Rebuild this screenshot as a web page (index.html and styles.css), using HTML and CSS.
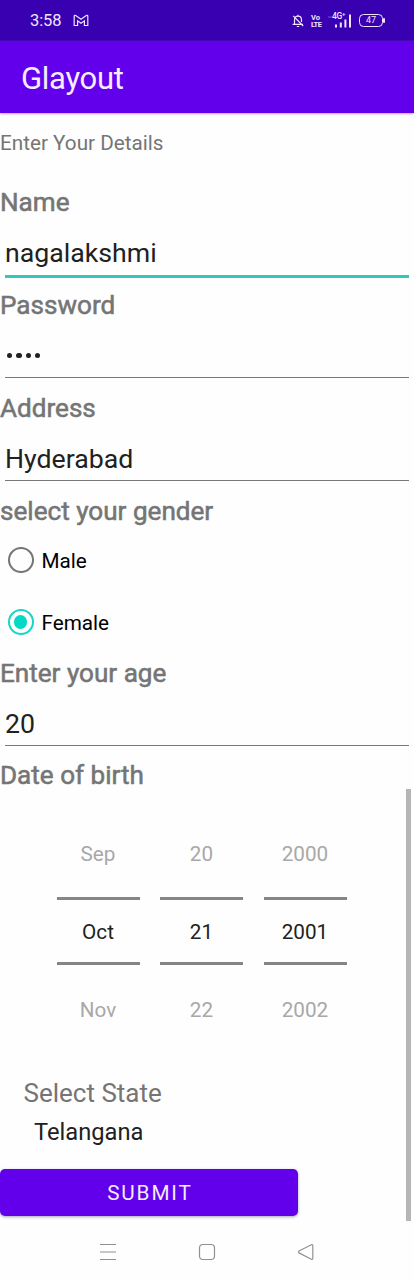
FILE: index.html
```html
<!DOCTYPE html>
<html lang="en">
<head>
<meta charset="utf-8">
<title>Glayout</title>
<link rel="stylesheet" href="styles.css">
</head>
<body>
<div class="screen">
  <header class="status">
    <span class="clock">3:58</span>
    <svg class="mail" width="16" height="13" viewBox="0 0 16 13"><path d="M1.2 11.5V2.4Q1.2 .7 2.7 1.6L8 5.2L13.3 1.6Q14.8 .7 14.8 2.4V11.5H11.4V6.8L8 9.2L4.6 6.8V11.5Z"/></svg>
    <svg class="bell" width="12" height="14" viewBox="0 0 12 14"><path d="M2.5 10V6Q2.5 2.2 6 2.2Q9.5 2.2 9.5 6V8M.6 10.3H11M4.8 12.5H7.2M6 .8V2M1.2 1.8L11.2 12"/></svg>
    <span class="volte"><span>Vo</span><span>LTE</span></span>
    <span class="signal">
      <svg width="24" height="16" viewBox="0 0 24 16"><path class="dots" d="M1 3V5M3 3V5"/><path class="bars" d="M8 11.5V14.5M12.8 9.5V14.5M17.4 6.5V14.5M22 1.5V14.5"/></svg>
      <span class="network">4G⁺</span>
    </span>
    <span class="battery">47</span>
  </header>
  <h1 class="appbar">Glayout</h1>
  <main class="content">
    <form class="form">
      <p class="intro">Enter Your Details</p>
      <div class="field"><div class="label">Name</div><div class="value active">nagalakshmi</div></div>
      <div class="field"><div class="label">Password</div><div class="value"><span class="secret"><i></i><i></i><i></i><i></i></span></div></div>
      <div class="field"><div class="label">Address</div><div class="value">Hyderabad</div></div>
      <div class="label gender">select your gender</div>
      <div class="option"><span class="radio"></span><span class="choice">Male</span></div>
      <div class="option"><span class="radio checked"></span><span class="choice">Female</span></div>
      <div class="field age"><div class="label">Enter your age</div><div class="value">20</div></div>
      <div class="label birth">Date of birth</div>
      <div class="picker">
        <div class="wheel"><span>Sep</span><span class="current">Oct</span><span>Nov</span></div>
        <div class="wheel"><span>20</span><span class="current">21</span><span>22</span></div>
        <div class="wheel"><span>2000</span><span class="current">2001</span><span>2002</span></div>
      </div>
      <div class="state-label">Select State</div>
      <div class="state">Telangana</div>
      <div class="submit">SUBMIT</div>
    </form>
    <div class="scrollbar"></div>
  </main>
  <nav class="nav">
    <svg width="18" height="18" viewBox="0 0 18 18"><path d="M1 1.5H17M1 9H17M1 16.5H17"/></svg>
    <svg width="18" height="18" viewBox="0 0 18 18"><rect x="1.5" y="1.5" width="15" height="15" rx="3.5"/></svg>
    <svg width="18" height="18" viewBox="0 0 18 18"><path d="M2 8Q1 9 2 9.9L14.3 16.2Q15.8 16.6 15.8 15.2V2.8Q15.8 1.4 14.3 1.8Z"/></svg>
  </nav>
</div>
</body>
</html>
```
FILE: styles.css
```css
* { box-sizing: border-box; }
body { margin: 0; background: #fefefe; font-family: Roboto, "Noto Sans", sans-serif; }
.screen { width: 414px; height: 1280px; overflow: hidden; display: flex; flex-direction: column; color: #212121; }
.status { height: 41px; flex: none; background: #3800b1; color: #efe5ff; display: flex; align-items: center; padding-left: 30px; }
.status svg { fill: none; stroke: #efe5ff; stroke-width: 1.2; }
.clock { width: 43px; font-size: 16.5px; letter-spacing: -.1px; }
.mail { margin-right: 203px; }
.bell { margin-right: 7px; }
.volte { width: 11px; display: flex; flex-direction: column; font-size: 7.5px; line-height: 7px; font-weight: 700; letter-spacing: -.6px; }
.volte span:first-child { letter-spacing: 0; }
.signal { position: relative; width: 24px; height: 16px; margin-left: 6px; }
.signal svg { display: block; }
.status .bars { stroke-width: 2; }
.status .dots { stroke-width: .7; opacity: .5; }
.network { position: absolute; left: 4px; top: -1px; font-size: 8.5px; line-height: 9px; font-weight: 500; letter-spacing: -.3px; }
.battery { position: relative; width: 24px; height: 13px; margin-left: 7px; border: 1.5px solid #efe5ff; border-radius: 4.5px; font-size: 9px; line-height: 11px; text-align: center; }
.battery::after { content: ""; position: absolute; right: -3px; top: 3px; width: 2px; height: 5px; border-radius: 1px; background: #efe5ff; }
.appbar { height: 72px; flex: none; margin: 0 0 1px; padding-left: 21px; background: #6200eb; color: #f5edff; font-size: 31px; font-weight: 400; line-height: 75px; box-shadow: 0 1px 2px #b99fe6; letter-spacing: -.3px; }
.content { display: flex; height: 1107px; flex: none; }
.form { width: 409px; flex: none; }
.intro { margin: 14px 0 29px; font-size: 20.7px; line-height: 30px; color: #757575; }
.field { height: 103px; }
.label { height: 31px; font-size: 26.1px; line-height: 31px; color: #757575; -webkit-text-stroke: .55px #757575; }
.value { height: 57px; margin-left: 5px; border-bottom: 1.5px solid #777; font-size: 26.7px; line-height: 41px; padding-top: 15px; }
.value.active { height: 60px; border-bottom: 3px solid #2fc9bd; }
.secret { height: 39px; display: flex; align-items: center; gap: 4px; padding-left: 2px; }
.secret i { width: 5.3px; height: 5.3px; border-radius: 50%; background: #212121; }
.gender { margin-bottom: 2px; }
.option { height: 62px; display: flex; align-items: center; padding-left: 7.5px; gap: 8px; color: #000; font-size: 20.7px; }
.choice { padding-top: 2px; }
.radio { width: 26px; height: 26px; border: 2.5px solid #757575; border-radius: 50%; }
.radio.checked { display: grid; place-items: center; border-color: #16d7c7; }
.radio.checked::after { content: ""; width: 13.5px; height: 13.5px; border-radius: 50%; background: #03dac5; }
.age { margin-top: 5px; height: 102px; }
.birth { margin-bottom: 23px; }
.picker { display: flex; gap: 20.5px; padding-left: 56.5px; }
.wheel { width: 83px; display: grid; grid-template-rows: 83px 68px 83px; align-items: center; text-align: center; font-size: 20.7px; color: #a8a8a8; }
.wheel span:first-child { padding-bottom: 4px; }
.wheel span:last-child { padding-top: 6px; }
.wheel .current { height: 68px; line-height: 65px; border: solid #858585; border-width: 3px 0; color: #212121; }
.state-label { margin-top: 30px; padding-left: 23.5px; font-size: 26px; line-height: 31px; color: #757575; }
.state { margin: 8px 0 21px; padding-left: 34px; font-size: 23.7px; line-height: 31px; }
.submit { width: 298px; height: 47px; border-radius: 5px; background: #6200eb; color: #f3eaff; box-shadow: 0 1px 3px #a9a2b5; font-size: 20.7px; line-height: 48px; text-align: center; text-indent: 2px; letter-spacing: 1.9px; }
.scrollbar { width: 5px; height: 432px; margin: 675px 0 0 -3px; flex: none; background: #b5b5b5; }
.nav { height: 59px; flex: none; display: flex; gap: 81px; padding: 22px 0 0 99px; }
.nav svg { fill: none; stroke: #929292; stroke-width: 1.2; }
```
